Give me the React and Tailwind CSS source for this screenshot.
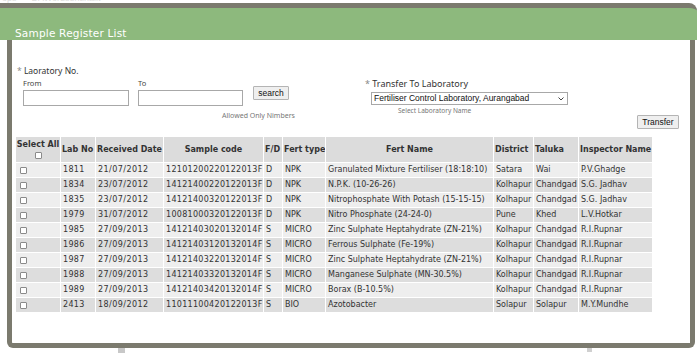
import React from "react";

const rows = [
  ["1811", "21/07/2012", "12101200220122013F", "D", "NPK", "Granulated Mixture Fertiliser (18:18:10)", "Satara", "Wai", "P.V.Ghadge"],
  ["1834", "23/07/2012", "14121400220122013F", "D", "NPK", "N.P.K. (10-26-26)", "Kolhapur", "Chandgad", "S.G. Jadhav"],
  ["1835", "23/07/2012", "14121400320122013F", "D", "NPK", "Nitrophosphate With Potash (15-15-15)", "Kolhapur", "Chandgad", "S.G. Jadhav"],
  ["1979", "31/07/2012", "10081000320122013F", "D", "NPK", "Nitro Phosphate (24-24-0)", "Pune", "Khed", "L.V.Hotkar"],
  ["1985", "27/09/2013", "14121403020132014F", "S", "MICRO", "Zinc Sulphate Heptahydrate (ZN-21%)", "Kolhapur", "Chandgad", "R.I.Rupnar"],
  ["1986", "27/09/2013", "14121403120132014F", "S", "MICRO", "Ferrous Sulphate (Fe-19%)", "Kolhapur", "Chandgad", "R.I.Rupnar"],
  ["1987", "27/09/2013", "14121403220132014F", "S", "MICRO", "Zinc Sulphate Heptahydrate (ZN-21%)", "Kolhapur", "Chandgad", "R.I.Rupnar"],
  ["1988", "27/09/2013", "14121403320132014F", "S", "MICRO", "Manganese Sulphate (MN-30.5%)", "Kolhapur", "Chandgad", "R.I.Rupnar"],
  ["1989", "27/09/2013", "14121403420132014F", "S", "MICRO", "Borax (B-10.5%)", "Kolhapur", "Chandgad", "R.I.Rupnar"],
  ["2413", "18/09/2012", "11011100420122013F", "S", "BIO", "Azotobacter", "Solapur", "Solapur", "M.Y.Mundhe"],
];

const widths = ["w-[34px]", "w-[67px]", "w-[99px]", "w-[18px]", "w-[42px]", "w-[167px]", "w-[39px]", "w-[44px]", "w-[73px]"];
const tracks = ["tracking-[0.3px]", "tracking-[0.45px]", "tracking-[0.3px]", "", "", "", "", "", ""];

function Box() {
  return <div className="w-[7px] h-[7px] border border-[#8a8a8a] bg-white rounded-[1px]" />;
}

export default function App() {
  return (
    <div className="w-[700px] h-[353px] bg-white overflow-hidden" style={{ fontFamily: "'DejaVu Sans', sans-serif" }}>
      <div className="h-[3px] overflow-hidden">
        <div className="-mt-[7px] ml-[2px] text-[9px] leading-[10px] text-[#dedede]" style={{ fontFamily: "'Liberation Sans', sans-serif" }}>
          ops&nbsp;&nbsp;&nbsp;&nbsp;&nbsp;&nbsp;DAWordsentinalit
        </div>
      </div>
      <div className="w-[697px] h-[37px] border-t-[5px] border-[#7b7a6e] bg-[#8db97d] rounded-tr-[8px]">
        <div className="pl-[15px] pt-[18px] text-[10.5px] leading-[14px] text-white tracking-[0.2px]">Sample Register List</div>
      </div>
      <div className="ml-[7px] w-[688px] h-[308px] border-x-[5px] border-b-[5px] border-[#7b7a6e] rounded-b-[6px]">
        <div className="h-[97px] flex text-[#333]" style={{ fontFamily: "'Noto Sans', sans-serif" }}>
          <div className="w-[353px] pl-[5px] pt-[25px]">
            <div className="h-[12px] leading-[12px] text-[8.5px]"><span className="text-[#888]">*</span> Laoratory No.</div>
            <div className="flex h-[12px] leading-[12px] text-[7.5px] text-[#444]">
              <span className="ml-[6px] w-[115px]">From</span>
              <span>To</span>
            </div>
            <div className="flex items-start mt-[1px]">
              <div className="ml-[6px] w-[106px] h-[16px] border border-[#a8a8a8] bg-white" />
              <div className="ml-[9px] w-[105px] h-[16px] border border-[#a8a8a8] bg-white" />
              <div className="ml-[10px] -mt-[4px] w-[36px] h-[14px] border border-[#b4b4b4] bg-[#efefef] rounded-[1px] flex items-center justify-center text-[8.5px] text-[#111]" style={{ fontFamily: "'Liberation Sans', sans-serif" }}>search</div>
            </div>
            <div className="mt-[4px] ml-[205px] h-[12px] leading-[12px] text-[7px] text-[#777]">Allowed Only Nimbers</div>
          </div>
          <div className="flex-1 pt-[38px]">
            <div className="h-[12px] leading-[12px] text-[9px]"><span className="text-[#888]">*</span> Transfer To Laboratory</div>
            <div className="mt-[2px] ml-[6px] w-[197px] h-[13px] border border-[#a8a8a8] bg-white flex items-center justify-between pl-[2px] pr-[3px] text-[8.5px] text-[#111]" style={{ fontFamily: "'Liberation Sans', sans-serif" }}>
              <span>Fertiliser Control Laboratory, Aurangabad</span>
              <svg width="6" height="4" viewBox="0 0 6 4"><path d="M0.5 0.5 L3 3 L5.5 0.5" fill="none" stroke="#444" strokeWidth="1" /></svg>
            </div>
            <div className="mt-[1px] ml-[33px] h-[10px] leading-[10px] text-[6.5px] text-[#777]">Select Laboratory Name</div>
            <div className="-mt-px ml-[272px] w-[42px] h-[14px] border border-[#b4b4b4] bg-[#efefef] rounded-[1px] flex items-center justify-center text-[8.5px] text-[#111]" style={{ fontFamily: "'Liberation Sans', sans-serif" }}>Transfer</div>
          </div>
        </div>
        <div className="ml-[4px] flex flex-col gap-px text-[8px] text-[#333]">
          <div className="flex gap-px h-[25px] font-bold text-[8px] text-[#333]">
            <div className="w-[44px] bg-[#dcdcdc] flex flex-col items-center pt-[3px] gap-[2px]">
              <span className="leading-[10px]">Select All</span>
              <Box />
            </div>
            {["Lab No", "Received Date", "Sample code", "F/D", "Fert type", "Fert Name", "District", "Taluka", "Inspector Name"].map((h, i) => (
              <div key={h} className={`${widths[i]} bg-[#dcdcdc] flex items-center whitespace-nowrap overflow-hidden ${i === 2 || i === 5 ? "justify-center" : "pl-[1px]"}`}>{h}</div>
            ))}
          </div>
          {rows.map((r, ri) => (
            <div key={ri} className="flex gap-px h-[14px]">
              <div className={`w-[44px] flex items-center pl-[4px] ${ri % 2 === 0 ? "bg-[#eeeeee]" : "bg-[#dddddd]"}`}><Box /></div>
              {r.map((c, ci) => (
                <div key={ci} className={`${widths[ci]} ${tracks[ci]} flex items-center pl-[2px] whitespace-nowrap overflow-hidden ${ri % 2 === 0 ? "bg-[#eeeeee]" : "bg-[#dddddd]"}`}>{c}</div>
              ))}
            </div>
          ))}
        </div>
      </div>
      <div className="flex">
        <div className="ml-[118px] w-[7px] h-[5px] bg-[#c8c8c8]" />
        <div className="ml-[462px] w-[5px] h-[4px] bg-[#d0d0d0]" />
      </div>
    </div>
  );
}
